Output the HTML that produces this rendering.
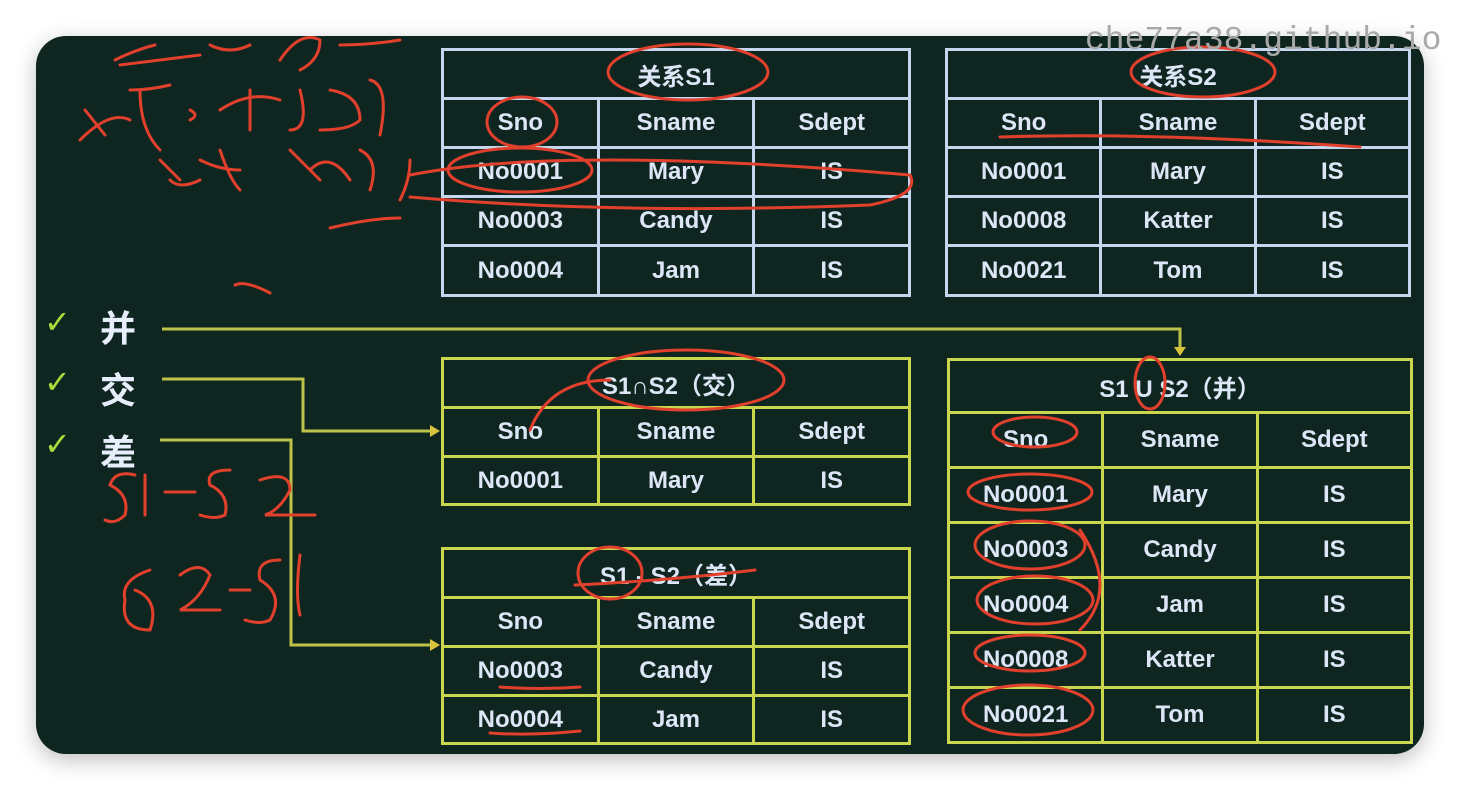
<!DOCTYPE html>
<html><head><meta charset="utf-8"><style>
html,body{margin:0;padding:0;background:#fff;width:1460px;height:790px;overflow:hidden;position:relative}
.panel{position:absolute;left:36px;top:36px;width:1388px;height:718px;border-radius:30px;background:#0f2520;box-shadow:0 6px 22px rgba(0,0,0,.25);overflow:hidden}
table{position:absolute;border-collapse:collapse;table-layout:fixed;font-family:"Liberation Sans","Noto Sans CJK SC",sans-serif;font-weight:bold;font-size:24px;color:#dce6f6;text-align:center}
td{padding:0;border:3px solid #c6d6ee}
.y td{border-color:#c9d64e}
.wm{position:absolute;left:1085px;top:22px;font-family:"Liberation Mono",monospace;font-size:33px;color:#a9a9a9;z-index:5}
.lab{position:absolute;left:100px;font-family:"Noto Sans CJK SC",sans-serif;font-weight:bold;font-size:36px;color:#e6eefc}
.ck{position:absolute;left:44px;font-size:32px;font-weight:bold;color:#a6dc3c;font-family:"DejaVu Sans",sans-serif}
svg{position:absolute;left:0;top:0}
</style></head><body>
<div class="panel"></div>
<table style="left:441px;top:48px;width:470px">
<tr style="height:49px"><td colspan="3">关系S1</td></tr>
<tr style="height:49px"><td>Sno</td><td>Sname</td><td>Sdept</td></tr>
<tr style="height:49px"><td>No0001</td><td>Mary</td><td>IS</td></tr>
<tr style="height:49px"><td>No0003</td><td>Candy</td><td>IS</td></tr>
<tr style="height:50px"><td>No0004</td><td>Jam</td><td>IS</td></tr>
</table>
<table style="left:945px;top:48px;width:466px">
<tr style="height:49px"><td colspan="3">关系S2</td></tr>
<tr style="height:49px"><td>Sno</td><td>Sname</td><td>Sdept</td></tr>
<tr style="height:49px"><td>No0001</td><td>Mary</td><td>IS</td></tr>
<tr style="height:49px"><td>No0008</td><td>Katter</td><td>IS</td></tr>
<tr style="height:50px"><td>No0021</td><td>Tom</td><td>IS</td></tr>
</table>
<table class="y" style="left:441px;top:357px;width:470px">
<tr style="height:49px"><td colspan="3">S1∩S2（交）</td></tr>
<tr style="height:49px"><td>Sno</td><td>Sname</td><td>Sdept</td></tr>
<tr style="height:48px"><td>No0001</td><td>Mary</td><td>IS</td></tr>
</table>
<table class="y" style="left:441px;top:547px;width:470px">
<tr style="height:49px"><td colspan="3">S1 - S2（差）</td></tr>
<tr style="height:49px"><td>Sno</td><td>Sname</td><td>Sdept</td></tr>
<tr style="height:49px"><td>No0003</td><td>Candy</td><td>IS</td></tr>
<tr style="height:48px"><td>No0004</td><td>Jam</td><td>IS</td></tr>
</table>
<table class="y" style="left:947px;top:358px;width:466px">
<tr style="height:53px"><td colspan="3">S1 U S2（并）</td></tr>
<tr style="height:55px"><td>Sno</td><td>Sname</td><td>Sdept</td></tr>
<tr style="height:55px"><td>No0001</td><td>Mary</td><td>IS</td></tr>
<tr style="height:55px"><td>No0003</td><td>Candy</td><td>IS</td></tr>
<tr style="height:55px"><td>No0004</td><td>Jam</td><td>IS</td></tr>
<tr style="height:55px"><td>No0008</td><td>Katter</td><td>IS</td></tr>
<tr style="height:55px"><td>No0021</td><td>Tom</td><td>IS</td></tr>
</table>
<div class="ck" style="top:303px">✓</div><div class="ck" style="top:363px">✓</div><div class="ck" style="top:425px">✓</div>
<div class="lab" style="top:300px">并</div><div class="lab" style="top:362px">交</div><div class="lab" style="top:424px">差</div>
<svg width="1460" height="790" viewBox="0 0 1460 790">
<g fill="none" stroke="#bcc24a" stroke-width="3">
<path d="M162 329H1180V350"/><path d="M162 379H303V431H432"/><path d="M160 440H291V645H432"/>
</g>
<g fill="#d9c23c"><path d="M1174 347h12l-6 9z"/><path d="M430 425v12l10-6z"/><path d="M430 639v12l10-6z"/></g>
<g fill="none" stroke="#e0402c" stroke-width="3" stroke-linecap="round">
<path d="M115 60q20-10 40-15M120 65q40-5 80-10M210 45q20 10 40 0M280 60q20-30 40-20q0 20-20 30M340 45q30 0 60-5"/>
<path d="M85 110l20 25M80 140q30-30 50-20M130 90q20 0 40-5M140 90q0 40 20 60M190 110q10 5 0 10M220 110q30-20 60-10M250 90v40M300 90q10 40-10 40M330 90q30 5 30 30q-10 10 -40 10M370 80q20 5 10 55"/>
<path d="M160 160l20 20M170 180q10 10 30 0M200 160q20 10 40 10M220 150q10 30 20 40M290 150q20 20 30 30M310 170q20-20 40 10M360 150q20 10 10 40M330 228q40-10 70-10M400 200q10-20 10-40"/>
<ellipse cx="688" cy="72" rx="80" ry="28"/><ellipse cx="1203" cy="72" rx="72" ry="25"/>
<ellipse cx="522" cy="122" rx="35" ry="25"/><ellipse cx="520" cy="170" rx="72" ry="22"/>
<path d="M410 175q150-30 500 0q10 20-40 30q-250 10-460-8M1000 137q150-5 360 10M235 285q10-5 35 8"/>
<ellipse cx="686" cy="380" rx="98" ry="30"/><ellipse cx="610" cy="573" rx="32" ry="26"/><path d="M575 585q100-5 180-15"/>
<path d="M530 430q20-50 80-50M500 687q40 3 80 0M490 733q40 3 90-2"/>
<ellipse cx="1150" cy="383" rx="15" ry="26"/><ellipse cx="1035" cy="432" rx="42" ry="15"/>
<ellipse cx="1030" cy="492" rx="62" ry="18"/><ellipse cx="1030" cy="545" rx="55" ry="24"/><ellipse cx="1035" cy="600" rx="58" ry="24"/><ellipse cx="1030" cy="653" rx="55" ry="18"/><ellipse cx="1028" cy="710" rx="65" ry="25"/>
<path d="M1080 530q40 60 0 100"/>
<path d="M135 475q-20-5-25 10q20 10 15 30q-10 10-20 5M145 475v40M165 492h30M230 470q-25 0-20 15q20 10 15 30q-10 5-25 0M260 480q30-10 30 10q-10 20-25 25h50"/>
<path d="M150 570q-30 10-25 30q-5 30 25 30q10-30-15-40M180 575q20-15 30 0q-10 25-30 35h40M230 590h20M280 560q-25 0-20 20q25 15 10 40q-10 5-25 0M300 555q-5 40 0 60"/>
</g>
</svg>
<div class="wm">che77a38.github.io</div>
</body></html>
